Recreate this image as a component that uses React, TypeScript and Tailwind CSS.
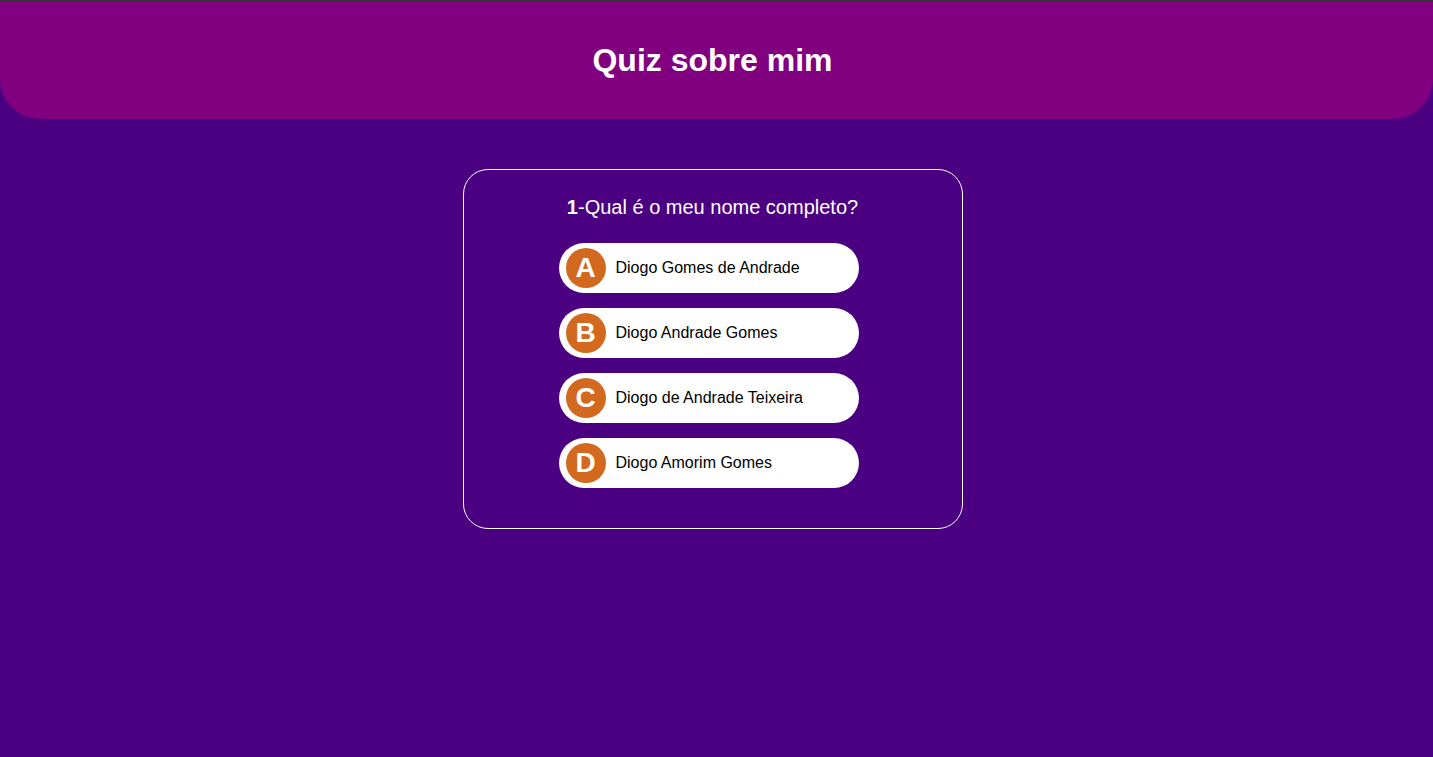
const options = [
  { letter: 'A', text: 'Diogo Gomes de Andrade' },
  { letter: 'B', text: 'Diogo Andrade Gomes' },
  { letter: 'C', text: 'Diogo de Andrade Teixeira' },
  { letter: 'D', text: 'Diogo Amorim Gomes' },
];

export default function App() {
  return (
    <div
      className="min-h-[757px] bg-[#4b0082] border-t-2 border-[#333333]"
      style={{ fontFamily: '"Liberation Sans", Arial, sans-serif' }}
    >
      <header className="h-[117px] bg-[#800080] rounded-b-[40px] flex items-center justify-center pr-[8px]">
        <h1 className="text-[32px] font-bold text-white leading-none -mt-[2px]">Quiz sobre mim</h1>
      </header>

      <main className="flex justify-center pt-[50px] pr-[8px]">
        <div className="w-[500px] h-[360px] border border-white rounded-[25px] pt-[25px] flex flex-col items-center">
          <h2 className="text-[20px] leading-[24px] text-white">
            <span className="font-bold">1</span>-Qual é o meu nome completo?
          </h2>
          <div className="mt-[24px] mr-[8px] flex flex-col gap-[15px]">
            {options.map((o) => (
              <button
                key={o.letter}
                className="w-[300px] h-[50px] bg-white rounded-[25px] flex items-center pl-[7px] gap-[10px] text-left cursor-pointer"
              >
                <span className="w-[40px] h-[40px] rounded-full bg-[#d2691e] text-white font-bold text-[28px] leading-none flex items-center justify-center">
                  {o.letter}
                </span>
                <span className="text-[16px] text-black">{o.text}</span>
              </button>
            ))}
          </div>
        </div>
      </main>
    </div>
  );
}
